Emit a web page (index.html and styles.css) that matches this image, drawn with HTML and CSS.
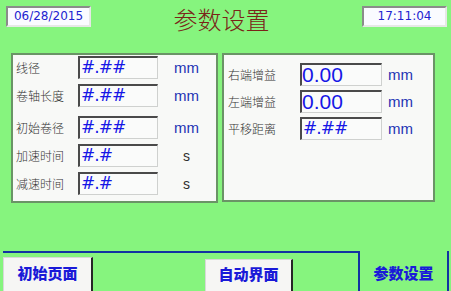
FILE: index.html
```html
<!DOCTYPE html>
<html lang="zh-CN">
<head>
    <meta charset="UTF-8">
    <meta name="viewport" content="width=device-width, initial-scale=1.0">
    <title>参数设置</title>
    <link rel="stylesheet" href="styles.css">
</head>
<body>
    <div class="screen">
        <div class="header">
            <div class="clock">06/28/2015</div>
            <div class="title">参数设置</div>
            <div class="clock">17:11:04</div>
        </div>

        <div class="panels">
            <div class="panel panel-left">
                <div class="row">
                    <span class="label">线径</span>
                    <span class="field">#.##</span>
                    <span class="unit">mm</span>
                </div>
                <div class="row">
                    <span class="label">卷轴长度</span>
                    <span class="field">#.##</span>
                    <span class="unit">mm</span>
                </div>
                <div class="row row-wide">
                    <span class="label">初始卷径</span>
                    <span class="field">#.##</span>
                    <span class="unit">mm</span>
                </div>
                <div class="row">
                    <span class="label">加速时间</span>
                    <span class="field">#.#</span>
                    <span class="unit unit-s">s</span>
                </div>
                <div class="row">
                    <span class="label">减速时间</span>
                    <span class="field">#.#</span>
                    <span class="unit unit-s">s</span>
                </div>
            </div>

            <div class="panel panel-right">
                <div class="row">
                    <span class="label">右端增益</span>
                    <span class="field field-num">0.00</span>
                    <span class="unit">mm</span>
                </div>
                <div class="row">
                    <span class="label">左端增益</span>
                    <span class="field field-num">0.00</span>
                    <span class="unit">mm</span>
                </div>
                <div class="row">
                    <span class="label">平移距离</span>
                    <span class="field">#.##</span>
                    <span class="unit">mm</span>
                </div>
            </div>
        </div>

        <div class="tabbar">
            <div class="tab-rail">
                <div class="tab tab-first">初始页面</div>
                <div class="tab tab-second">自动界面</div>
            </div>
            <div class="tab-active">参数设置</div>
        </div>
    </div>
</body>
</html>
```

FILE: styles.css
```css
html, body {
    margin: 0;
    padding: 0;
}
body {
    background: #86f47e;
    font-family: "Noto Sans CJK SC", sans-serif;
}
.screen {
    width: 451px;
    height: 291px;
    background: #86f47e;
    display: flex;
    flex-direction: column;
    overflow: hidden;
}

/* header */
.header {
    height: 53px;
    display: flex;
    align-items: flex-start;
    padding: 6px 4px 0 6px;
    box-sizing: border-box;
}
.clock {
    width: 85px;
    height: 21px;
    box-sizing: border-box;
    background: #fafbff;
    border: 2px solid #e6e8e6;
    border-top-color: #8a8c8a;
    border-left-color: #8a8c8a;
    font-family: "DejaVu Sans", sans-serif;
    font-size: 12px;
    line-height: 17px;
    color: #2222d0;
    text-align: center;
}
.title {
    flex: 1;
    text-align: center;
    padding-right: 10px;
    font-size: 24px;
    font-weight: 300;
    line-height: 26px;
    color: #7a2418;
}

/* panels */
.panels {
    display: flex;
    gap: 4px;
    padding-left: 11px;
    height: 150px;
}
.panel {
    background: #f8f9f7;
    border: 2px solid #6a9466;
    box-sizing: border-box;
    display: flex;
    flex-direction: column;
}
.panel-left {
    width: 207px;
    padding: 1px 0 0 3px;
    gap: 5px;
}
.panel-right {
    width: 213px;
    height: 149px;
    padding: 8px 0 0 4px;
    gap: 4px;
}
.row {
    display: flex;
    align-items: center;
    height: 23px;
}
.row-wide {
    margin-top: 4px;
}
.label {
    width: 62px;
    font-size: 12px;
    font-weight: 300;
    color: #333;
    white-space: nowrap;
}
.panel-right .label {
    width: 72px;
}
.field {
    width: 80px;
    height: 23px;
    box-sizing: border-box;
    background: #fafbfa;
    border: 2px solid #cfd1cf;
    border-top-color: #4a4a4a;
    border-left-color: #4a4a4a;
    border-right-width: 1px;
    border-bottom-width: 1px;
    padding-left: 1px;
    font-family: "DejaVu Sans", sans-serif;
    font-size: 17px;
    letter-spacing: -1px;
    line-height: 19px;
    color: #1616e6;
}
.panel-right .field {
    width: 82px;
}
.field-num {
    font-family: "Liberation Sans", sans-serif;
    font-size: 21px;
    letter-spacing: 0;
    padding-left: 0;
}
.unit {
    width: 57px;
    text-align: center;
    font-family: "Liberation Sans", sans-serif;
    font-size: 15px;
    color: #2434b4;
}
.unit-s {
    color: #303030;
    font-size: 14px;
}
.panel-right .unit {
    width: auto;
    margin-left: 6px;
}

/* tab bar */
.tabbar {
    margin-top: auto;
    height: 40px;
    display: flex;
    padding-left: 3px;
}
.tab-rail {
    width: 355px;
    border-top: 2px solid #1232a2;
    display: flex;
    align-items: flex-end;
}
.tab {
    box-sizing: border-box;
    background: #f6f6f4;
    border-top: 1px solid #d8d8d8;
    border-left: 1px solid #d8d8d8;
    border-right: 2px solid #262626;
    text-align: center;
    font-size: 15px;
    font-weight: 900;
    color: #1a1ad8;
}
.tab-first {
    width: 90px;
    height: 34px;
    line-height: 30px;
}
.tab-second {
    width: 88px;
    height: 32px;
    line-height: 28px;
    margin-left: 112px;
}
.tab-active {
    width: 91px;
    box-sizing: border-box;
    border-left: 2px solid #1232a2;
    border-right: 2px solid #1232a2;
    text-align: center;
    padding-top: 11px;
    font-size: 15px;
    font-weight: 900;
    color: #1a1ad8;
}
```
